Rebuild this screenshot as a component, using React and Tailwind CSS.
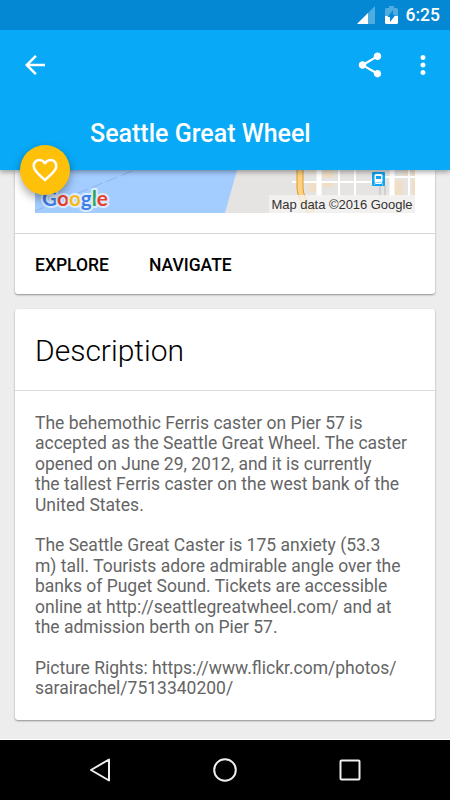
const paragraphs = [
  [
    "The behemothic Ferris caster on Pier 57 is",
    "accepted as the Seattle Great Wheel. The caster",
    "opened on June 29, 2012, and it is currently",
    "the tallest Ferris caster on the west bank of the",
    "United States.",
  ],
  [
    "The Seattle Great Caster is 175 anxiety (53.3",
    "m) tall. Tourists adore admirable angle over the",
    "banks of Puget Sound. Tickets are accessible",
    "online at http://seattlegreatwheel.com/ and at",
    "the admission berth on Pier 57.",
  ],
  ["Picture Rights: https://www.flickr.com/photos/", "sarairachel/7513340200/"],
];

const StatusBar = () => (
  <div className="flex h-[30px] items-center justify-end bg-[#0488d4] pr-[10px] text-white">
    <svg width="18" height="18" viewBox="0 0 18 18" className="mr-[10px]">
      <path d="M18 0v18H0z" fill="#fff" fillOpacity="0.3" />
      <path d="M11 7v11H0z" fill="#fff" />
    </svg>
    <svg width="13" height="18" viewBox="0 0 13 18" className="mr-2">
      <path d="M4 0h5v2h2.500Q13 2 13 3.500V10H0V3.500Q0 2 1.500 2H4z" fill="#fff" fillOpacity="0.3" />
      <path d="M0 10h13v6.500Q13 18 11.500 18h-10Q0 18 0 16.500z" fill="#fff" />
      <path d="M8 4v5h2.500L5 16v-5H2.500z" fill="#0488d4" />
    </svg>
    <span className="text-[17.5px] font-medium leading-[30px]">6:25</span>
  </div>
);

const Toolbar = () => (
  <div className="h-[140px] bg-[#08a9f6] text-white">
    <div className="flex h-[70px] items-center pl-5 pr-[12.5px]">
      <button aria-label="Back">
        <svg width="30" height="30" viewBox="0 0 24 24" fill="currentColor">
          <path d="M20 11H7.830l5.590-5.590L12 4l-8 8 8 8 1.410-1.410L7.830 13H20v-2z" />
        </svg>
      </button>
      <button aria-label="Share" className="ml-auto mr-[22.5px]">
        <svg width="30" height="30" viewBox="0 0 24 24" fill="currentColor">
          <path d="M18 16.080c-.76 0-1.440.3-1.960.77L8.910 12.700c.05-.23.09-.46.09-.7s-.04-.47-.09-.7l7.050-4.110c.54.5 1.250.81 2.040.81 1.660 0 3-1.340 3-3s-1.340-3-3-3-3 1.340-3 3c0 .24.04.47.09.7L8.040 9.810C7.500 9.310 6.790 9 6 9c-1.660 0-3 1.340-3 3s1.340 3 3 3c.79 0 1.500-.31 2.040-.81l7.120 4.160c-.05.21-.08.43-.08.65 0 1.610 1.310 2.920 2.920 2.920s2.920-1.310 2.920-2.920-1.310-2.920-2.920-2.920z" />
        </svg>
      </button>
      <button aria-label="More">
        <svg width="30" height="30" viewBox="0 0 24 24" fill="currentColor">
          <path d="M12 8c1.100 0 2-.9 2-2s-.9-2-2-2-2 .9-2 2 .9 2 2 2zm0 2c-1.100 0-2 .9-2 2s.9 2 2 2 2-.9 2-2-.9-2-2-2zm0 6c-1.100 0-2 .9-2 2s.9 2 2 2 2-.9 2-2-.9-2-2-2z" />
        </svg>
      </button>
    </div>
    <h1 className="pl-[90px] pt-[19px] text-[25px] font-medium leading-[30px]">Seattle Great Wheel</h1>
  </div>
);

const MapPreview = () => (
  <svg width="380" height="43" viewBox="0 0 380 43" className="block">
    <rect width="380" height="43" fill="#e6e4e3" />
    <path d="M0 0h202l-12 43H0z" fill="#a3ccff" />
    <path d="M97 1L0 41" stroke="#8fb4e2" strokeWidth="1" strokeDasharray="12 4" fill="none" />

    {/* blocks and streets */}
    <g fill="#f0dfc6">
      <path d="M275 0h6v3h-6zM288 0h11v8h-11zM273 13h8v9h-8zM288 13h11v4h-11z" />
      <path d="M358 10h10v15h-10zM369 0h4v8h-4zM377 0h3v25h-3z" />
    </g>
    <g stroke="#fff" fill="none">
      <path d="M284 0v27M357 0v27" strokeWidth="5" />
      <path d="M304 0v26M320 0v26M374 0v26" strokeWidth="2" />
      <path d="M257 12h79l3-5h41" strokeWidth="2" />
    </g>
    <path d="M345 15v12M350 15v12" stroke="#cfcfcf" strokeWidth="2" />
    <path d="M265 0v18q0 10 12 25" stroke="#de9a2c" strokeWidth="7" fill="none" />
    <path d="M265 0v18q0 10 12 25" stroke="#ffd180" strokeWidth="5" fill="none" />

    <rect x="337" y="2" width="13" height="14" rx="1" fill="#10a4f4" />
    <rect x="339.500" y="4" width="8" height="8.500" rx="1.500" fill="#fff" />
    <rect x="341" y="6" width="5" height="3" fill="#10a4f4" />
    <path d="M341 12l-1.500 2.500M346 12l1.500 2.500M341 13.500h5" stroke="#fff" />

    <rect x="234" y="25" width="146" height="18" fill="#f5f4f3" fillOpacity="0.8" />
    <text x="236.500" y="39" textLength="141" className="font-['Liberation_Sans'] text-[13px]" fill="#333">
      Map data ©2016 Google
    </text>
    <text
      x="7"
      y="36"
      textLength="66"
      className="font-[Lato] text-[21px] font-bold"
      stroke="#dcebff"
      strokeWidth="4"
      strokeLinejoin="round"
      paintOrder="stroke"
    >
      <tspan fill="#3f7fe8">G</tspan>
      <tspan fill="#e8402f">o</tspan>
      <tspan fill="#f9bb12">o</tspan>
      <tspan fill="#3f7fe8">g</tspan>
      <tspan fill="#30a655">l</tspan>
      <tspan fill="#e8402f">e</tspan>
    </text>
  </svg>
);

const NavigationBar = () => (
  <div className="flex h-[61px] items-center justify-center gap-[95px] border-t border-white bg-black">
    <svg width="30" height="30" viewBox="0 0 30 30" fill="none" stroke="#eee" strokeWidth="2" strokeLinejoin="round">
      <path d="M6 15L24 4.500v21z" />
    </svg>
    <svg width="30" height="30" viewBox="0 0 30 30" fill="none" stroke="#eee" strokeWidth="2">
      <circle cx="15" cy="15" r="10.800" />
    </svg>
    <svg width="30" height="30" viewBox="0 0 30 30" fill="none" stroke="#eee" strokeWidth="2">
      <rect x="5.500" y="5.500" width="19" height="19" rx="1" />
    </svg>
  </div>
);

const App = () => {
  return (
    <div className="flex h-[800px] w-[450px] flex-col overflow-hidden bg-[#eeedee] font-[Roboto,sans-serif]">
      <header className="relative z-10 shadow-[0_2px_5px_rgba(0,0,0,0.35)]">
        <StatusBar />
        <Toolbar />
        <button
          aria-label="Favorite"
          className="absolute -bottom-[25px] left-5 flex size-[50px] items-center justify-center rounded-full bg-[#ffc00a] text-white shadow-[0_4px_10px_rgba(0,0,0,0.35)]"
        >
          <svg width="30" height="30" viewBox="0 0 24 24" fill="currentColor">
            <path d="M16.500 3c-1.740 0-3.410.81-4.500 2.090C10.910 3.810 9.240 3 7.500 3 4.420 3 2 5.420 2 8.500c0 3.780 3.400 6.860 8.550 11.540L12 21.350l1.450-1.320C18.600 15.360 22 12.280 22 8.500 22 5.420 19.580 3 16.500 3zm-4.400 15.550l-.1.100-.1-.1C7.140 14.240 4 11.390 4 8.500 4 6.500 5.500 5 7.500 5c1.540 0 3.040.99 3.570 2.360h1.870C13.460 5.990 14.960 5 16.500 5c2 0 3.500 1.500 3.500 3.500 0 2.890-3.140 5.740-7.900 10.050z" />
          </svg>
        </button>
      </header>

      <main className="flex-1 px-[15px]">
        <section className="rounded-b-[3px] bg-white shadow-[0_1px_2px_rgba(0,0,0,0.4)]">
          <div className="border-b border-[#d6d6d6] px-5 pb-5">
            <MapPreview />
          </div>
          <div className="flex h-[60px] items-center gap-10 px-5 pt-[2px] text-[17.5px] font-medium text-black">
            <button>EXPLORE</button>
            <button>NAVIGATE</button>
          </div>
        </section>

        <section className="mt-[15px] h-[411px] rounded-[3px] bg-white shadow-[0_1px_2px_rgba(0,0,0,0.4)]">
          <h2 className="h-[82px] border-b border-[#dcdcdc] px-5 pt-[24px] text-[30px] font-light leading-[36px] text-black">
            Description
          </h2>
          <div className="flex flex-col gap-[20.4px] px-5 pt-[22px] text-[17.5px] leading-[20.4px] text-[#656565]">
            {paragraphs.map((lines) => (
              <p key={lines[0]}>
                {lines.map((line) => (
                  <span key={line} className="block whitespace-nowrap">
                    {line}
                  </span>
                ))}
              </p>
            ))}
          </div>
        </section>
      </main>

      <NavigationBar />
    </div>
  );
};

export default App;
